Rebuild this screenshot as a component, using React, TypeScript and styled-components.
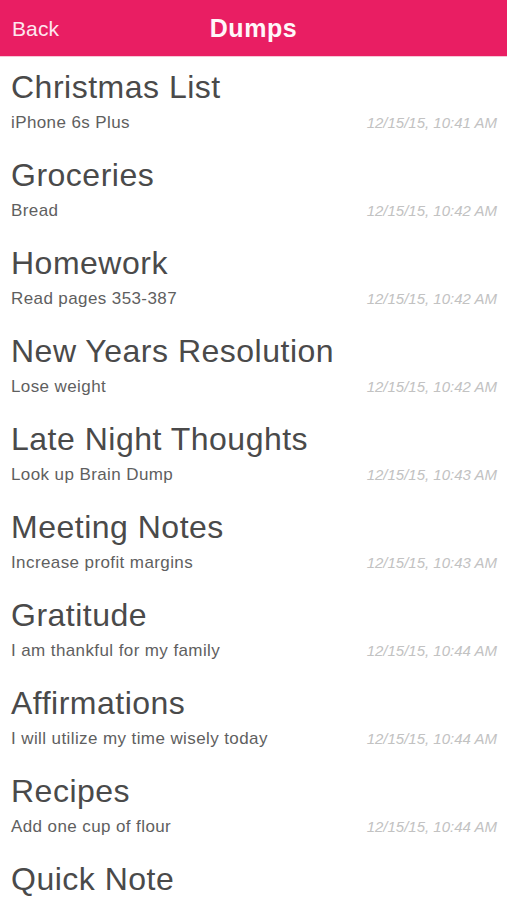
import React from "react";
import styled, { createGlobalStyle } from "styled-components";

const Global = createGlobalStyle`
  html, body {
    margin: 0;
    padding: 0;
    background: #ffffff;
    overflow: hidden;
    font-family: "Liberation Sans", Arial, Helvetica, sans-serif;
  }
`;

const Screen = styled.div`
  width: 507px;
  height: 900px;
  overflow: hidden;
  display: flex;
  flex-direction: column;
  background: #fff;
`;

const NavBar = styled.header`
  flex: 0 0 auto;
  height: 56px;
  background: #e91e63;
  border-bottom: 1px solid #f7c6d6;
  display: grid;
  grid-template-columns: 1fr auto 1fr;
  align-items: center;
`;

const BackButton = styled.span`
  justify-self: start;
  padding-left: 12px;
  font-size: 21px;
  color: #fde7ef;
  letter-spacing: 0.1px;
  margin-top: 1px;
`;

const Title = styled.h1`
  margin: 0;
  font-size: 25px;
  font-weight: 700;
  color: #fff6f9;
  letter-spacing: 0.6px;
  margin-top: 1px;
`;

const List = styled.ul`
  list-style: none;
  margin: 0;
  padding: 0;
  display: flex;
  flex-direction: column;
`;

const Row = styled.li`
  padding: 12px 10px 12px 11px;
  display: flex;
  flex-direction: column;
  gap: 8px;
`;

const RowTitle = styled.div`
  font-size: 32px;
  line-height: 36px;
  letter-spacing: 0.5px;
  color: #4a4a4a;
  white-space: nowrap;
`;

const RowMeta = styled.div`
  display: flex;
  justify-content: space-between;
  align-items: baseline;
  height: 20px;
`;

const Preview = styled.span`
  font-size: 17px;
  line-height: 20px;
  letter-spacing: 0.4px;
  color: #5f5f5f;
  white-space: nowrap;
`;

const Stamp = styled.span`
  font-size: 15px;
  line-height: 20px;
  font-style: italic;
  color: #c2c2c2;
  white-space: nowrap;
`;

type Dump = { title: string; preview?: string; date?: string };

const dumps: Dump[] = [
  { title: "Christmas List", preview: "iPhone 6s Plus", date: "12/15/15, 10:41 AM" },
  { title: "Groceries", preview: "Bread", date: "12/15/15, 10:42 AM" },
  { title: "Homework", preview: "Read pages 353-387", date: "12/15/15, 10:42 AM" },
  { title: "New Years Resolution", preview: "Lose weight", date: "12/15/15, 10:42 AM" },
  { title: "Late Night Thoughts", preview: "Look up Brain Dump", date: "12/15/15, 10:43 AM" },
  { title: "Meeting Notes", preview: "Increase profit margins", date: "12/15/15, 10:43 AM" },
  { title: "Gratitude", preview: "I am thankful for my family", date: "12/15/15, 10:44 AM" },
  { title: "Affirmations", preview: "I will utilize my time wisely today", date: "12/15/15, 10:44 AM" },
  { title: "Recipes", preview: "Add one cup of flour", date: "12/15/15, 10:44 AM" },
  { title: "Quick Note" },
];

export default function App() {
  return (
    <>
      <Global />
      <Screen>
        <NavBar>
          <BackButton>Back</BackButton>
          <Title>Dumps</Title>
          <span />
        </NavBar>
        <List>
          {dumps.map((d) => (
            <Row key={d.title}>
              <RowTitle>{d.title}</RowTitle>
              {d.preview && (
                <RowMeta>
                  <Preview>{d.preview}</Preview>
                  <Stamp>{d.date}</Stamp>
                </RowMeta>
              )}
            </Row>
          ))}
        </List>
      </Screen>
    </>
  );
}
